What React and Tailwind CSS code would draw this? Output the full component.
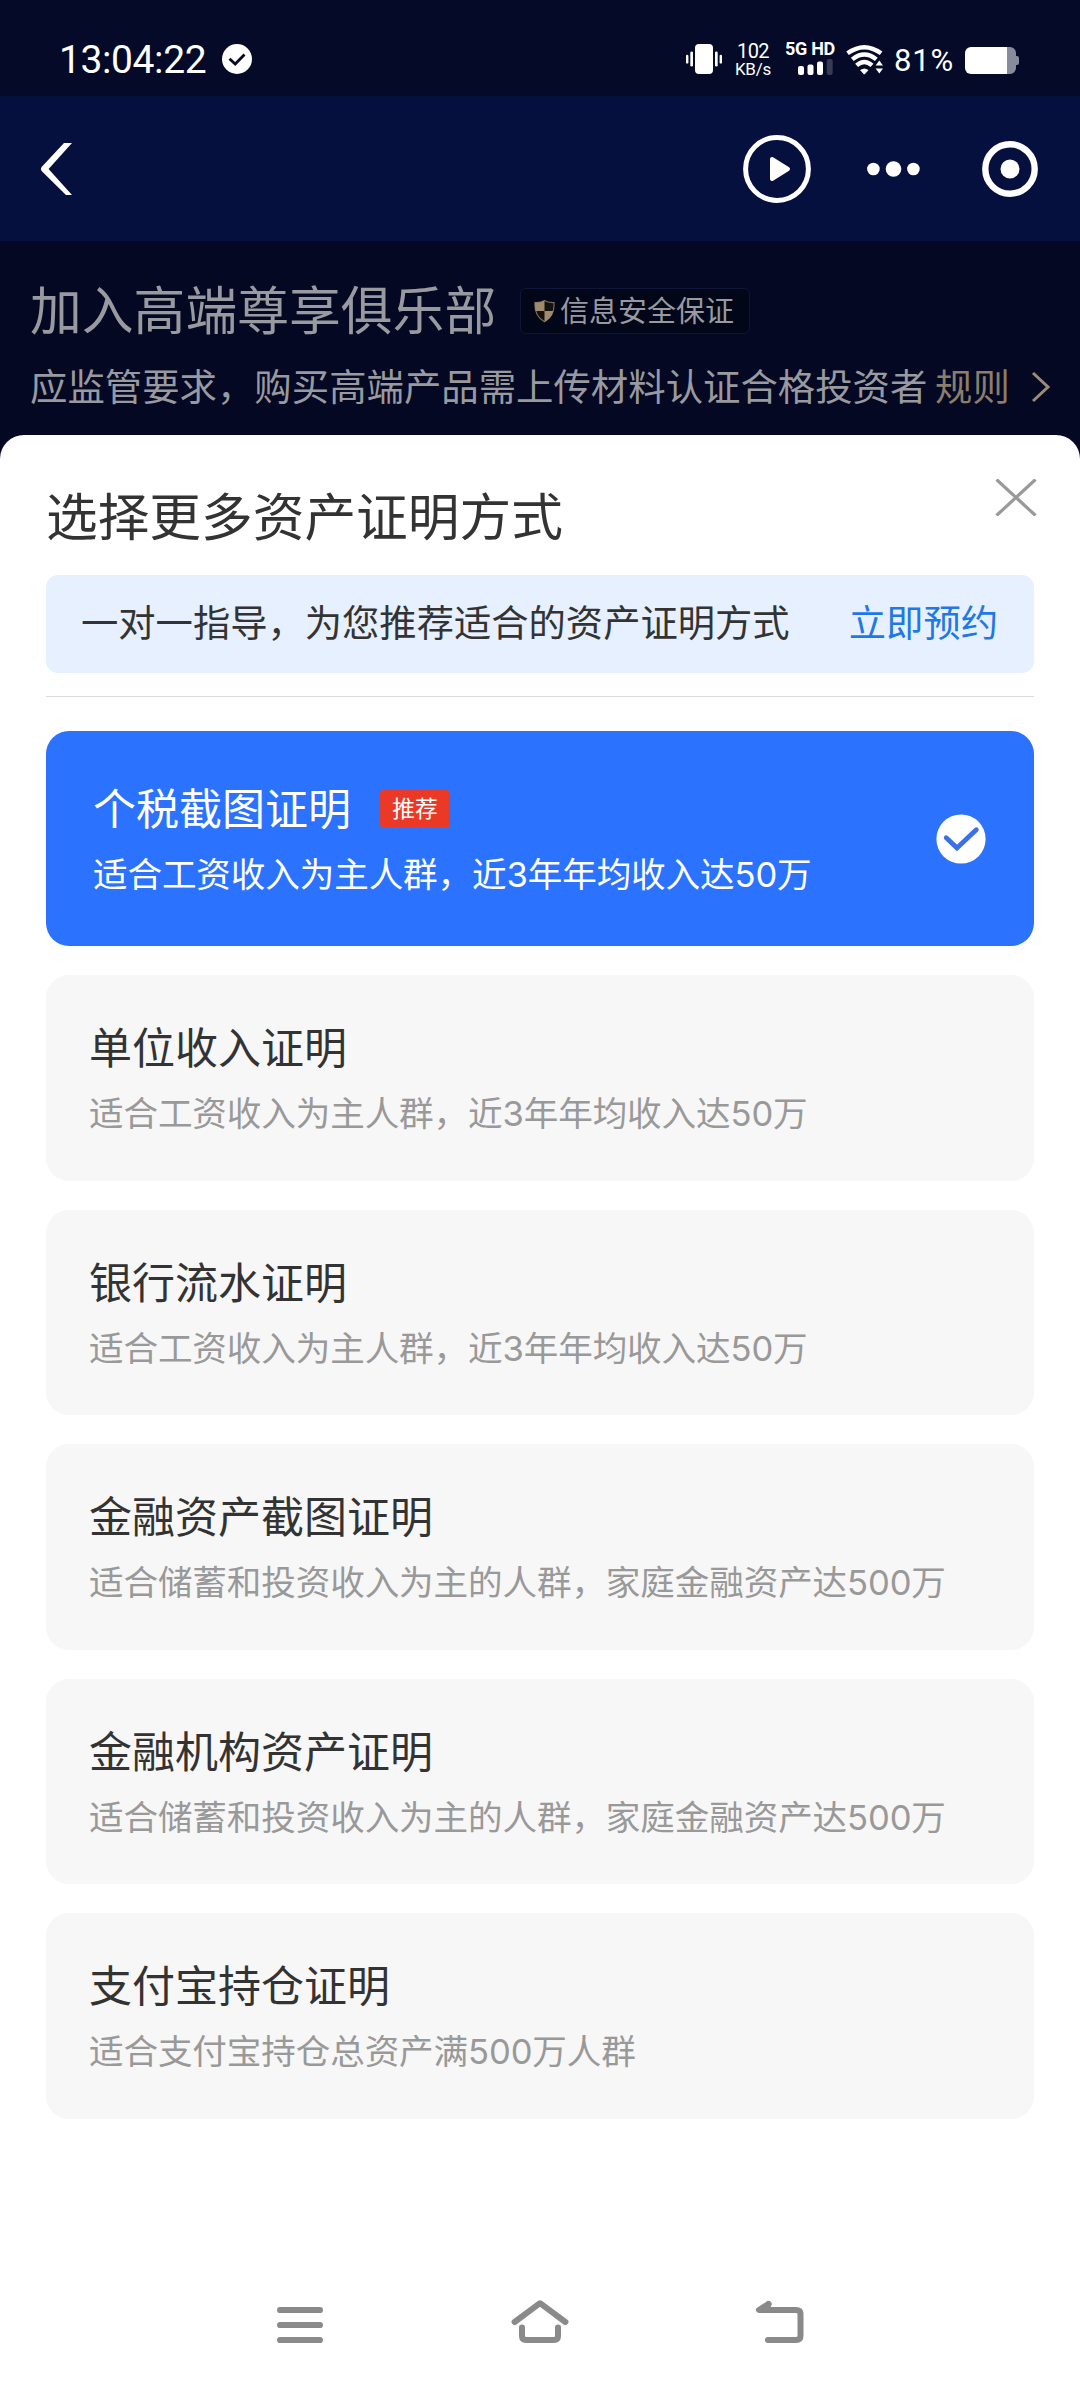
const options = [
  { title: "单位收入证明", desc: "适合工资收入为主人群，近3年年均收入达50万" },
  { title: "银行流水证明", desc: "适合工资收入为主人群，近3年年均收入达50万" },
  { title: "金融资产截图证明", desc: "适合储蓄和投资收入为主的人群，家庭金融资产达500万" },
  { title: "金融机构资产证明", desc: "适合储蓄和投资收入为主的人群，家庭金融资产达500万" },
  { title: "支付宝持仓证明", desc: "适合支付宝持仓总资产满500万人群" },
];

function StatusBar() {
  return (
    <div className="flex h-24 shrink-0 items-start bg-[#040a27] pl-[59px] text-white font-['Roboto','Noto_Sans_CJK_SC',sans-serif]">
      <span className="mt-[36px] w-[163px] text-[39px] leading-[48px] tracking-[-0.4px]">13:04:22</span>
      <svg className="mt-[44px]" width="30" height="30" viewBox="0 0 30 30">
        <circle cx="15" cy="15" r="15" fill="#fff" />
        <path d="M7.5 14.8 L13.2 20 L22.5 10.5" fill="none" stroke="#040a27" strokeWidth="2.8" />
      </svg>
      <svg className="mt-[44px] ml-[434px]" width="36" height="30" viewBox="0 0 36 30" fill="#fff">
        <rect x="9" y="0" width="18" height="30" rx="4" />
        <rect x="4.3" y="7.5" width="2.7" height="15" rx="1.3" />
        <rect x="0" y="10.8" width="2.4" height="8.8" rx="1.2" />
        <rect x="29" y="7.5" width="2.7" height="15" rx="1.3" />
        <rect x="33.6" y="10.8" width="2.4" height="8.8" rx="1.2" />
      </svg>
      <div className="ml-[13px] mt-[41px] flex w-[36px] flex-col items-center">
        <span className="text-[20px] leading-[20px] tracking-[-0.6px]">102</span>
        <span className="mt-[-1px] text-[17px] leading-[18px] tracking-[-0.2px]">KB/s</span>
      </div>
      <div className="ml-[14px] mt-[40px] flex w-[52px] flex-col items-end">
        <span className="w-full whitespace-nowrap text-[18px] font-bold leading-[18px] tracking-[-0.3px]">5G HD</span>
        <svg className="mt-[1px] mr-[4px]" width="35" height="16" viewBox="0 0 35 16" fill="#fff">
          <rect x="0" y="7" width="6" height="9" rx="2" />
          <rect x="9.5" y="5.5" width="6" height="10.5" rx="2" />
          <rect x="19" y="2.5" width="6" height="13.5" rx="2" />
          <rect x="28.7" y="0" width="6" height="16" rx="2" opacity="0.2" />
        </svg>
      </div>
      <svg className="ml-[9px] mt-[44px]" width="38" height="31" viewBox="0 0 38 31">
        <g fill="none" stroke="#fff" strokeWidth="4.4">
          <path d="M1.5 9.3 Q18.3 -2.9 35.1 9.3" />
          <path d="M6.3 15.4 Q18.3 5.6 30.3 15.4" />
          <path d="M10.6 21.4 Q18.3 14.6 26 21.4" />
        </g>
        <path d="M14.6 26.2 Q18.3 23.6 22 26.2 L18.3 30.2 Z" fill="#fff" stroke="#fff" strokeWidth="0.8" strokeLinejoin="round" />
        <path d="M29.4 22.6 L33.3 14.6 L38 21 V31 H29.4 Z" fill="#040a27" />
        <path d="M33.3 16.4 L37 21.6 H29.6 Z M33.3 29.6 L37 24.4 H29.6 Z" fill="#fff" />
      </svg>
      <span className="ml-[10px] mt-[43px] w-[71px] text-[31px] leading-[36px] tracking-[0.8px]">81%</span>
      <svg className="mt-[47px]" width="54" height="27" viewBox="0 0 54 27">
        <path d="M42 0 H45 A6 6 0 0 1 51 6 V9 H52 A2 2 0 0 1 54 11 V16 A2 2 0 0 1 52 18 H51 V21 A6 6 0 0 1 45 27 H42 Z" fill="#888b9c" />
        <path d="M42 0 V27 H6 A6 6 0 0 1 0 21 V6 A6 6 0 0 1 6 0 Z" fill="#fff" />
      </svg>
    </div>
  );
}

function TitleBar() {
  return (
    <div className="flex h-[145px] shrink-0 items-center bg-[#05103e] pl-[40px]">
      <svg width="34" height="52" viewBox="0 0 34 52">
        <path d="M24 0 H32 L8.6 26 L32 52 H26 L1.6 28 Q0 26 1.6 24 Z" fill="#fff" />
      </svg>
      <svg className="ml-[669px]" width="68" height="68" viewBox="0 0 68 68">
        <circle cx="34" cy="34" r="31.4" fill="none" stroke="#fff" strokeWidth="5" />
        <path d="M29 24 L45 34 L29 44 Z" fill="#fff" stroke="#fff" strokeWidth="4" strokeLinejoin="round" />
      </svg>
      <svg className="ml-[56px]" width="53" height="16" viewBox="0 0 53 16" fill="#fff">
        <circle cx="6.4" cy="8" r="6.3" />
        <circle cx="26.5" cy="8" r="7.8" />
        <circle cx="46.4" cy="8" r="6.3" />
      </svg>
      <svg className="ml-[62px]" width="56" height="56" viewBox="0 0 56 56">
        <circle cx="28" cy="28" r="24.7" fill="none" stroke="#fff" strokeWidth="6.4" />
        <circle cx="28" cy="28" r="9.5" fill="#fff" />
      </svg>
    </div>
  );
}

function ClubIntro() {
  return (
    <div className="h-[218px] shrink-0 bg-[#040823] pl-[30px] pt-[37px] text-[#999a9f]">
      <div className="flex items-start">
        <h1 className="w-[490px] whitespace-nowrap text-[51.8px] leading-[60px]">加入高端尊享俱乐部</h1>
        <div className="mt-[10px] flex h-[46px] w-[230px] items-center rounded-[6px] border border-[#10153a] bg-[#020619] pl-[13px]">
          <svg width="21" height="24" viewBox="0 0 21 24">
            <path d="M10.5 1.5 Q14 3.8 20 3.5 Q21 17 10.5 22.8 Q0 17 1 3.5 Q7 3.8 10.5 1.5 Z" fill="#14110f" stroke="#7d6c58" strokeWidth="1.2" />
            <path d="M10.5 1.5 V12 H1.6 Q0.8 8 1 3.5 Q7 3.8 10.5 1.5 Z" fill="#a08b6c" />
            <path d="M10.5 12 H19.4 Q17.5 19 10.5 22.8 Z" fill="#a08b6c" />
          </svg>
          <span className="mb-[4px] ml-[5px] whitespace-nowrap text-[29px] leading-[40px]">信息安全保证</span>
        </div>
      </div>
      <div className="mt-[22px] flex items-center text-[37.4px] leading-[50px]">
        <span className="w-[905px] whitespace-nowrap">应监管要求，购买高端产品需上传材料认证合格投资者</span>
        <span className="w-[96px] whitespace-nowrap text-[#8c7e68]">规则</span>
        <svg className="mt-[4px]" width="20" height="32" viewBox="0 0 20 32">
          <path d="M2 2 L17 16 L2 30" fill="none" stroke="#9a8c75" strokeWidth="3" />
        </svg>
      </div>
    </div>
  );
}

function SelectedOption() {
  return (
    <div className="mt-[34px] flex h-[215px] items-center justify-between rounded-[23px] bg-[#2b72ff] pl-[47px] pr-[48px] text-white">
      <div className="flex -translate-y-[2px] flex-col">
        <div className="flex h-[60px] items-center">
          <span className="w-[287px] text-[43px] leading-[60px]">个税截图证明</span>
          <span className="mt-[6px] flex h-[38px] w-[70px] items-center justify-center rounded-[4px] bg-[#ea3a27] pb-[2px] text-[22.7px] leading-[34px]">推荐</span>
        </div>
        <span className="mt-[11px] translate-y-[2px] whitespace-nowrap font-['Inter','Noto_Sans_CJK_SC',sans-serif] text-[34.6px] leading-[50px] tracking-[-0.12px]">适合工资收入为主人群，近3年年均收入达50万</span>
      </div>
      <svg width="50" height="50" viewBox="0 0 50 50">
        <circle cx="25" cy="25" r="24.6" fill="#fff" />
        <path d="M10.2 23.7 L21 34 L40.3 15.7" fill="none" stroke="#3a71e8" strokeWidth="4.8" strokeLinecap="round" />
      </svg>
    </div>
  );
}

function Option({ title, desc }) {
  return (
    <div className="h-[205.6px] rounded-[23px] bg-[#f7f7f7] pl-[43px] pt-[40px]">
      <div className="text-[43px] leading-[60px] text-[#333]">{title}</div>
      <div className="mt-[13px] whitespace-nowrap font-['Inter','Noto_Sans_CJK_SC',sans-serif] text-[34.6px] leading-[50px] tracking-[-0.12px] text-[#999]">{desc}</div>
    </div>
  );
}

function NavBar() {
  return (
    <div className="mt-auto flex h-[126px] items-center pl-[231px] text-[#8a8a8a]">
      <svg width="46" height="50" viewBox="0 0 46 50" fill="none" stroke="currentColor" strokeWidth="6.2" strokeLinecap="round">
        <path d="M3.1 10 H42.9 M3.1 25 H42.9 M3.1 40 H42.9" />
      </svg>
      <svg className="ml-[188px]" width="58" height="50" viewBox="0 0 58 50" fill="none" stroke="currentColor" strokeWidth="6" strokeLinecap="round" strokeLinejoin="round">
        <path d="M3.6 22 L29 3.2 L54.4 22" />
        <path d="M11 27.5 V36 Q11 40 15 40 H43 Q47 40 47 36 V27.5" />
      </svg>
      <svg className="ml-[186px]" width="50" height="50" viewBox="0 0 50 50" fill="none" stroke="currentColor" strokeWidth="6" strokeLinecap="round" strokeLinejoin="round">
        <path d="M13.5 4 L4 10 H41 Q45.5 10 45.5 14 V36 Q45.5 40 41 40 H13" />
        <path d="M13.5 4 L12 9" />
      </svg>
    </div>
  );
}

export default function App() {
  return (
    <div className="flex h-[2388px] w-[1080px] flex-col overflow-hidden bg-white font-['Noto_Sans_CJK_SC',sans-serif]">
      <StatusBar />
      <TitleBar />
      <ClubIntro />
      <div className="mt-[-24px] flex grow flex-col rounded-t-[24px] bg-white px-[46px] pt-[44px]">
        <div className="flex h-[96px] items-start justify-between">
          <h2 className="mt-[5px] text-[51.7px] leading-[60px] text-[#333]">选择更多资产证明方式</h2>
          <svg className="mr-[-3px]" width="42" height="37" viewBox="0 0 42 37">
            <path d="M1.5 0.5 L40.5 36.5 M40.5 0.5 L1.5 36.5" stroke="#999" strokeWidth="3.2" />
          </svg>
        </div>
        <div className="flex h-[98px] items-center justify-between rounded-[12px] bg-[#e6f0fe] pb-[6px] pl-[35px] pr-[36px] text-[37.3px] leading-[50px]">
          <span className="text-[#333]">一对一指导，为您推荐适合的资产证明方式</span>
          <span className="text-[#1f77e8]">立即预约</span>
        </div>
        <div className="mt-[23px] h-px shrink-0 bg-[#dcdcdc]" />
        <SelectedOption />
        <div className="mt-[29px] flex flex-col gap-[29px]">
          {options.map((o) => (
            <Option key={o.title} {...o} />
          ))}
        </div>
        <NavBar />
      </div>
    </div>
  );
}
